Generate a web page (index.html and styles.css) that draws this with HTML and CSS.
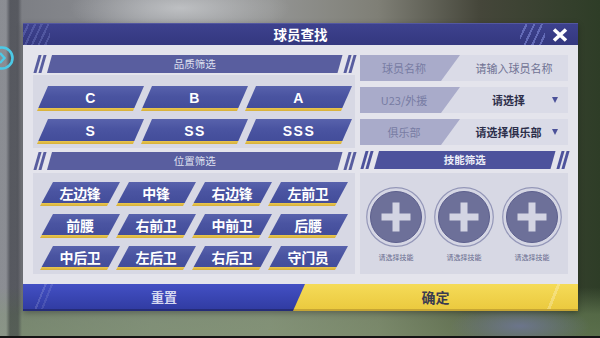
FILE: index.html
```html
<!DOCTYPE html>
<html lang="zh">
<head>
<meta charset="utf-8">
<title>球员查找</title>
<link rel="stylesheet" href="styles.css">
</head>
<body>
<div class="screen">
  <div class="side-icon">
    <svg width="16" height="28" viewBox="0 0 16 28"><circle cx="2" cy="14" r="10.5" fill="none" stroke="#4cc9e6" stroke-width="2.6"/><path d="M0 9 L4.5 14 L0 19" fill="none" stroke="#4cc9e6" stroke-width="2.4"/></svg>
  </div>
  <div class="panel">
    <div class="hdr">
      <div class="hdr-side left"><span class="stripes"></span></div>
      <div class="title">球员查找</div>
      <div class="hdr-side right">
        <span class="stripes"></span>
        <span class="close"><svg width="16" height="14" viewBox="0 0 16 14"><path d="M2 1.5 L14 12.5 M14 1.5 L2 12.5" stroke="#fff" stroke-width="3.6"/></svg></span>
      </div>
    </div>
    <div class="content">
      <div class="col col-left">
        <div class="subhead">
          <span class="slash"></span><span class="slash"></span>
          <span class="bar">品质筛选</span>
          <span class="slash"></span><span class="slash"></span>
        </div>
        <div class="grade-area">
          <div class="gbtn">C</div>
          <div class="gbtn">B</div>
          <div class="gbtn">A</div>
          <div class="gbtn">S</div>
          <div class="gbtn">SS</div>
          <div class="gbtn">SSS</div>
        </div>
        <div class="subhead sub-pos">
          <span class="slash"></span><span class="slash"></span>
          <span class="bar">位置筛选</span>
          <span class="slash"></span><span class="slash"></span>
        </div>
        <div class="pos-area">
          <div class="pbtn">左边锋</div>
          <div class="pbtn">中锋</div>
          <div class="pbtn">右边锋</div>
          <div class="pbtn">左前卫</div>
          <div class="pbtn">前腰</div>
          <div class="pbtn">右前卫</div>
          <div class="pbtn">中前卫</div>
          <div class="pbtn">后腰</div>
          <div class="pbtn">中后卫</div>
          <div class="pbtn">左后卫</div>
          <div class="pbtn">右后卫</div>
          <div class="pbtn">守门员</div>
        </div>
      </div>
      <div class="col col-right">
        <div class="field">
          <div class="flabel">球员名称</div>
          <div class="fvalue"><span class="txt placeholder">请输入球员名称</span></div>
        </div>
        <div class="field">
          <div class="flabel">U23/外援</div>
          <div class="fvalue"><span class="txt selected">请选择</span><span class="arrow"></span></div>
        </div>
        <div class="field">
          <div class="flabel">俱乐部</div>
          <div class="fvalue"><span class="txt selected">请选择俱乐部</span><span class="arrow"></span></div>
        </div>
        <div class="subhead sub-skill">
          <span class="slash"></span><span class="slash"></span>
          <span class="bar">技能筛选</span>
          <span class="slash"></span><span class="slash"></span>
        </div>
        <div class="skill-area">
          <div class="skill">
            <svg class="plus" width="60" height="60" viewBox="0 0 60 60"><circle cx="30" cy="30" r="29.3" fill="#d5d6e4" stroke="#9497b8" stroke-width="1.2"/><circle cx="30" cy="30" r="25.5" fill="#6d7099" stroke="#5c5f8d" stroke-width="1"/><path d="M26.5 15.5 H33.5 V26.5 H44.5 V33.5 H33.5 V44.5 H26.5 V33.5 H15.5 V26.5 H26.5 Z" fill="#d3d4e3"/></svg>
            <span class="skill-label">请选择技能</span>
          </div>
          <div class="skill">
            <svg class="plus" width="60" height="60" viewBox="0 0 60 60"><circle cx="30" cy="30" r="29.3" fill="#d5d6e4" stroke="#9497b8" stroke-width="1.2"/><circle cx="30" cy="30" r="25.5" fill="#6d7099" stroke="#5c5f8d" stroke-width="1"/><path d="M26.5 15.5 H33.5 V26.5 H44.5 V33.5 H33.5 V44.5 H26.5 V33.5 H15.5 V26.5 H26.5 Z" fill="#d3d4e3"/></svg>
            <span class="skill-label">请选择技能</span>
          </div>
          <div class="skill">
            <svg class="plus" width="60" height="60" viewBox="0 0 60 60"><circle cx="30" cy="30" r="29.3" fill="#d5d6e4" stroke="#9497b8" stroke-width="1.2"/><circle cx="30" cy="30" r="25.5" fill="#6d7099" stroke="#5c5f8d" stroke-width="1"/><path d="M26.5 15.5 H33.5 V26.5 H44.5 V33.5 H33.5 V44.5 H26.5 V33.5 H15.5 V26.5 H26.5 Z" fill="#d3d4e3"/></svg>
            <span class="skill-label">请选择技能</span>
          </div>
        </div>
      </div>
    </div>
    <div class="footer">
      <div class="btn-reset">重置</div>
      <div class="btn-ok">确定</div>
    </div>
  </div>
</div>
</body>
</html>
```
FILE: styles.css
```css
* { box-sizing: border-box; margin: 0; padding: 0; }
html, body { width: 600px; height: 338px; overflow: hidden; }
body { margin: 0; font-family: "Noto Sans CJK SC", "Noto Sans", sans-serif; }

.screen {
  position: relative;
  width: 600px;
  height: 338px;
  padding: 23px 22px 0 23px;
  background:
    linear-gradient(to top, #141414 0 2px, transparent 2px),
    radial-gradient(ellipse 110px 30px at 180px 8px, rgba(205,207,210,.75), transparent),
    radial-gradient(ellipse 70px 22px at 520px 326px, rgba(110,118,150,.85), transparent),
    linear-gradient(90deg, rgba(170,172,178,.35) 0 6px, rgba(50,52,60,.5) 10px 18px, transparent 22px),
    linear-gradient(to bottom, transparent 0 85%, rgba(115,140,95,.55) 93%, rgba(120,145,100,.6) 100%),
    linear-gradient(90deg, #7a7c82 0%, #8e9094 25%, #939493 45%, #7f7f76 63%, #45463a 80%, #2e3d27 100%);
}

.side-icon { position: absolute; left: 0; top: 44px; width: 16px; height: 28px; }
.side-icon svg { display: block; }

.panel { width: 555px; box-shadow: 0 2px 6px rgba(0,0,0,.3); }

/* header */
.hdr {
  display: flex;
  align-items: stretch;
  height: 22px;
  background: linear-gradient(#3d418e, #34387f);
  border-top: 1px solid #5357a0;
}
.hdr-side { width: 58px; display: flex; align-items: center; }
.hdr-side .stripes {
  display: block;
  height: 100%;
  width: 27px;
  background: repeating-linear-gradient(115deg, transparent 0 4px, rgba(110,118,190,.45) 4px 6px);
}
.hdr-side.right { padding-right: 10px; }
.hdr-side.right .stripes {
  width: 25px;
  margin-right: 7px;
  background: repeating-linear-gradient(115deg, transparent 0 5px, rgba(110,118,195,.8) 5px 7px);
}
.close { display: flex; width: 16px; height: 14px; }
.title {
  flex: 1;
  text-align: center;
  color: #fff;
  font-weight: 700;
  font-size: 13.5px;
  line-height: 21px;
}

/* content */
.content {
  display: grid;
  grid-template-columns: 322px 208px;
  column-gap: 5px;
  padding: 10px;
  height: 239px;
  background: #e4e4ec;
}
.col { display: flex; flex-direction: column; }

.subhead { display: flex; height: 18px; padding: 0 2px 0 3px; }
.subhead .slash {
  width: 2.5px;
  background: #585d9f;
  transform: skewX(-16deg);
  margin-right: 2.5px;
}
.subhead .bar {
  flex: 1;
  margin: 0 3px 0 1px;
  clip-path: polygon(5px 0, 100% 0, calc(100% - 5px) 100%, 0 100%);
  background: #595e9f;
  color: #dfe0ef;
  font-size: 10.5px;
  line-height: 18px;
  text-align: center;
}
.subhead .slash:last-child { margin-right: 0; }
.sub-pos { margin-top: 4px; }
.sub-skill { margin-top: 6px; }
.sub-skill .bar { background: #4d529c; color: #eceef8; font-weight: 700; }
.sub-skill .slash { background: #4d529c; }

.grade-area {
  margin-top: 2px;
  height: 73px;
  padding: 11px 0 0 4px;
  background: #d7d8e4;
  display: grid;
  grid-template-columns: repeat(3, 104px);
  grid-auto-rows: 25px;
  row-gap: 8px;
}
.gbtn, .pbtn {
  display: flex;
  align-items: center;
  justify-content: center;
  color: #fff;
  font-weight: 700;
  background: linear-gradient(180deg, #5862ac 0%, #4a54a1 40%, #434d9a 87%, #ebc94f 87%, #d6af3a 100%);
}
.gbtn {
  width: 107px;
  height: 25px;
  clip-path: polygon(11px 0, 100% 0, calc(100% - 11px) 100%, 0 100%);
  font-family: "Liberation Sans", Arial, sans-serif;
  font-size: 14px;
  letter-spacing: 1.5px;
  padding: 0 0 2px 1px;
}

.pos-area {
  margin-top: 3px;
  height: 101px;
  padding: 9px 0 0 7px;
  background: #d7d8e4;
  display: grid;
  grid-template-columns: repeat(4, 76px);
  grid-auto-rows: 24px;
  row-gap: 8px;
}
.pbtn {
  width: 80px;
  height: 24px;
  clip-path: polygon(13px 0, 100% 0, calc(100% - 13px) 100%, 0 100%);
  font-size: 14px;
  padding-bottom: 3px;
  letter-spacing: -0.3px;
}

/* right column */
.field { display: flex; height: 26px; background: #dadbe7; }
.field + .field { margin-top: 6px; }
.flabel {
  width: 100px;
  clip-path: polygon(0 0, 100% 0, calc(100% - 19px) 100%, 0 100%);
  background: #a9abca;
  color: #777ba3;
  font-size: 11px;
  display: flex;
  align-items: center;
  justify-content: center;
  padding-right: 12px;
}
.fvalue { flex: 1; display: flex; align-items: center; font-size: 11px; }
.fvalue .txt { flex: 1; text-align: center; }
.placeholder { color: #6f7293; }
.selected { color: #2c2e4a; font-weight: 700; padding-left: 5px; }
.arrow {
  width: 0;
  height: 0;
  border-left: 3.5px solid transparent;
  border-right: 3.5px solid transparent;
  border-top: 6px solid #4b5199;
  margin-right: 10px;
}

.skill-area {
  margin-top: 4px;
  height: 101px;
  padding-top: 14px;
  background: #d7d8e4;
  display: grid;
  grid-template-columns: repeat(3, 68px);
  justify-content: center;
  justify-items: center;
  align-content: start;
}
.skill { display: flex; flex-direction: column; align-items: center; }
.plus { display: block; }
.skill-label { margin-top: 5px; font-size: 7px; line-height: 10px; color: #676a8e; }

/* footer */
.footer { display: flex; height: 27px; }
.btn-reset {
  width: 282px;
  display: flex;
  align-items: center;
  justify-content: center;
  color: #d5d9f1;
  font-size: 13px;
  font-weight: 700;
  background:
    linear-gradient(112deg, transparent 0 20px, rgba(255,255,255,.14) 20px 22px, transparent 22px 26px, rgba(255,255,255,.1) 26px 28px, transparent 28px),
    linear-gradient(#4350c4, #313ca3);
  border-bottom: 2px solid #252c78;
}
.btn-ok {
  flex: 1;
  margin-left: -12px;
  clip-path: polygon(12px 0, 100% 0, 100% 100%, 0 100%);
  display: flex;
  align-items: center;
  justify-content: center;
  color: #3b3b50;
  font-size: 14px;
  font-weight: 700;
  background:
    linear-gradient(112deg, transparent 0 245px, rgba(255,255,255,.25) 245px 248px, transparent 248px),
    linear-gradient(#f5db58, #ebca3f);
  border-bottom: 2px solid #c6a534;
}
```
